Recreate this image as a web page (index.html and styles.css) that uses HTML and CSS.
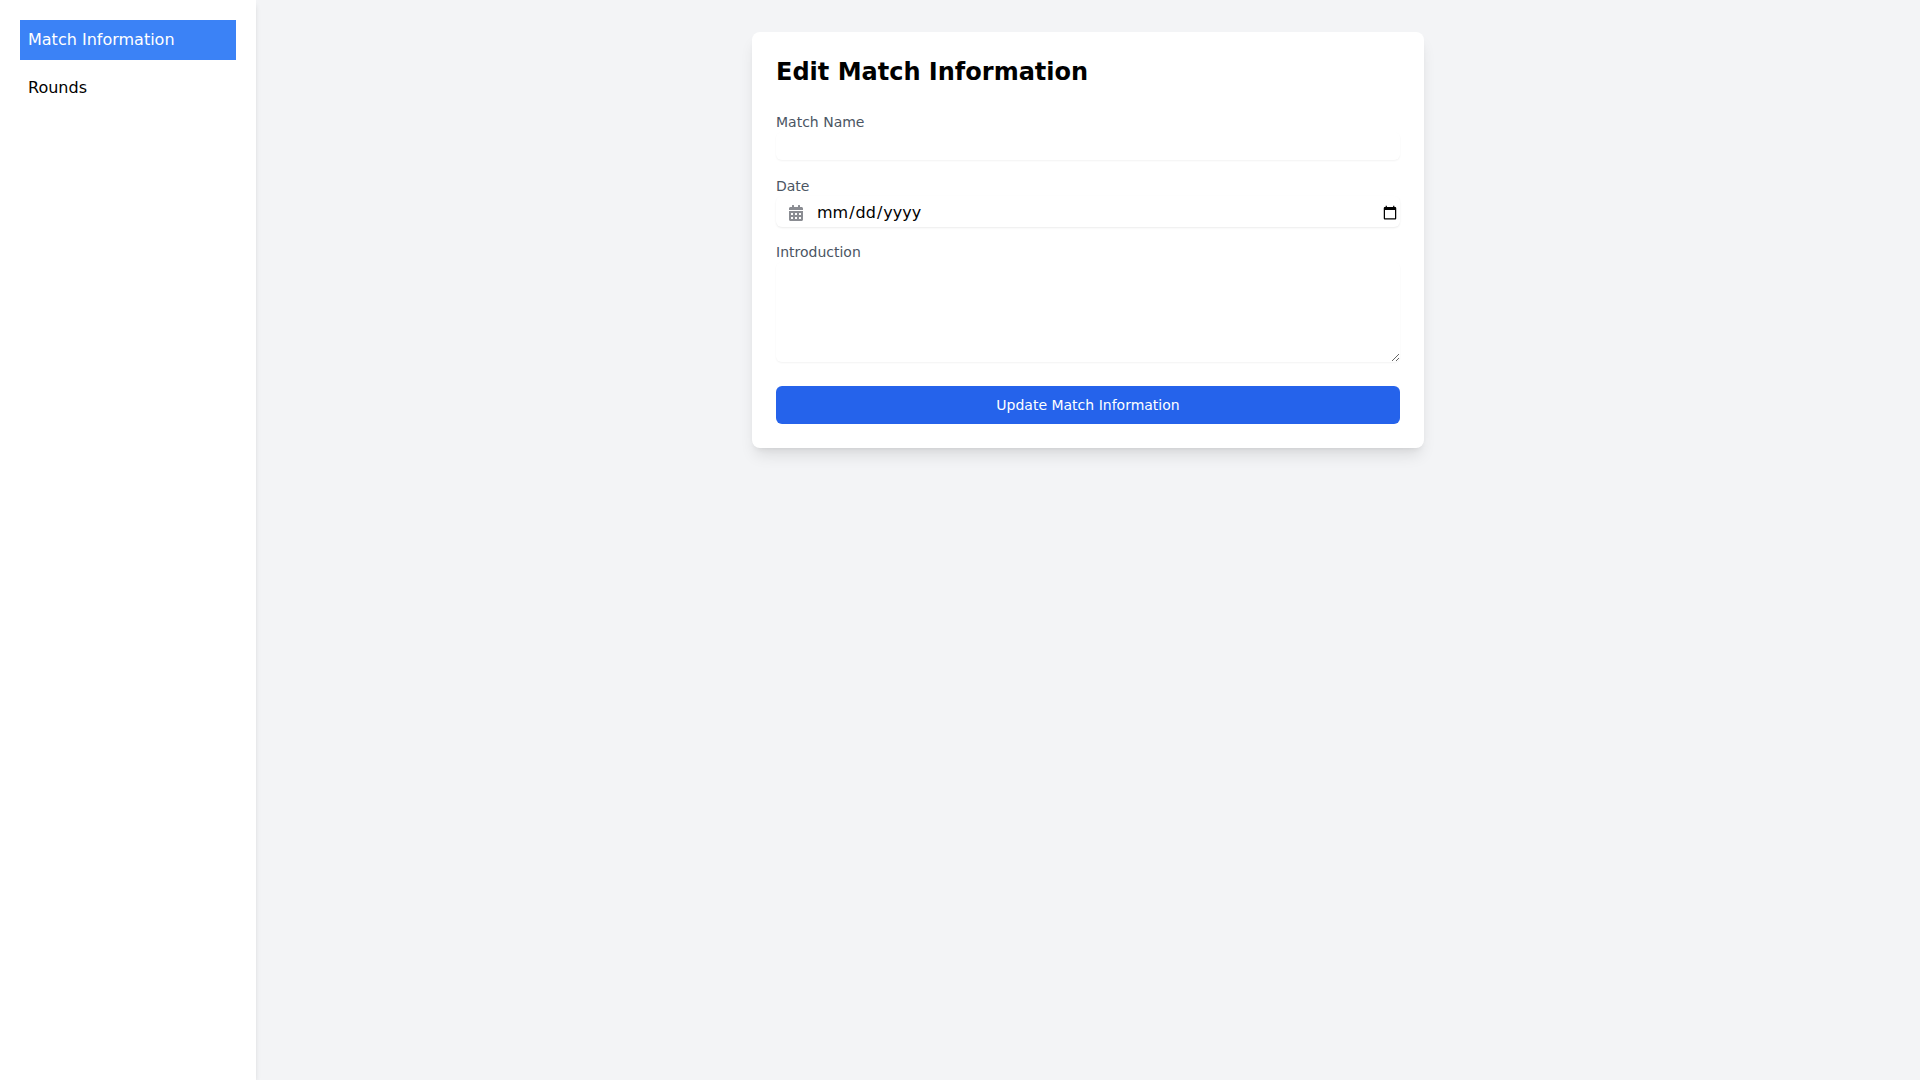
FILE: index.html
```html
<!DOCTYPE html>
<html lang="en">
<head>
<meta charset="utf-8">
<title>Edit Match Information</title>
<link rel="stylesheet" href="styles.css">
</head>
<body>
<div class="app">
  <aside class="sidebar">
    <nav class="nav">
      <a class="nav-item active">Match Information</a>
      <a class="nav-item">Rounds</a>
    </nav>
  </aside>
  <main class="main">
    <section class="card">
      <h1 class="title">Edit Match Information</h1>
      <form class="form">
        <div class="field">
          <label class="label">Match Name</label>
          <input class="control text" type="text">
        </div>
        <div class="field">
          <label class="label">Date</label>
          <div class="date-wrap">
            <svg class="date-icon" viewBox="0 0 448 512" aria-hidden="true"><path fill="currentColor" d="M0 464c0 26.500 21.500 48 48 48h352c26.500 0 48-21.500 48-48V192H0v272zm320-196c0-6.600 5.400-12 12-12h40c6.600 0 12 5.400 12 12v40c0 6.600-5.400 12-12 12h-40c-6.600 0-12-5.400-12-12v-40zm0 128c0-6.600 5.400-12 12-12h40c6.600 0 12 5.400 12 12v40c0 6.600-5.400 12-12 12h-40c-6.600 0-12-5.400-12-12v-40zM192 268c0-6.600 5.400-12 12-12h40c6.600 0 12 5.400 12 12v40c0 6.600-5.400 12-12 12h-40c-6.600 0-12-5.400-12-12v-40zm0 128c0-6.600 5.400-12 12-12h40c6.600 0 12 5.400 12 12v40c0 6.600-5.400 12-12 12h-40c-6.600 0-12-5.400-12-12v-40zM64 268c0-6.600 5.400-12 12-12h40c6.600 0 12 5.400 12 12v40c0 6.600-5.400 12-12 12H76c-6.600 0-12-5.400-12-12v-40zm0 128c0-6.600 5.400-12 12-12h40c6.600 0 12 5.400 12 12v40c0 6.600-5.400 12-12 12H76c-6.600 0-12-5.400-12-12v-40zM400 64h-48V16c0-8.800-7.200-16-16-16h-32c-8.800 0-16 7.200-16 16v48H160V16c0-8.800-7.200-16-16-16h-32c-8.800 0-16 7.200-16 16v48H48C21.500 64 0 85.500 0 112v48h448v-48c0-26.500-21.500-48-48-48z"/></svg>
            <input class="control date" type="date">
          </div>
        </div>
        <div class="field">
          <label class="label">Introduction</label>
          <textarea class="control area"></textarea>
        </div>
        <button class="submit" type="button">Update Match Information</button>
      </form>
    </section>
  </main>
</div>
</body>
</html>
```
FILE: styles.css
```css
* { box-sizing: border-box; }
html, body { margin: 0; height: 100%; }
body {
  font-family: "DejaVu Sans", sans-serif;
  font-size: 16px;
  line-height: 24px;
  color: #000;
  background: #f3f4f6;
}
.app { display: flex; height: 1080px; }
.sidebar {
  width: 256px;
  flex: none;
  background: #fff;
  padding: 20px;
  box-shadow: 0 4px 6px -1px rgba(0,0,0,.1), 0 2px 4px -2px rgba(0,0,0,.1);
}
.nav { display: flex; flex-direction: column; gap: 8px; }
.nav-item { display: block; height: 40px; padding: 8px; line-height: 24px; color: #000; }
.nav-item.active { background: #3b82f6; color: #fff; }
.main { flex: 1; display: flex; justify-content: center; align-items: flex-start; padding-top: 32px; }
.card {
  width: 672px;
  background: #fff;
  border-radius: 8px;
  padding: 24px;
  box-shadow: 0 10px 15px -3px rgba(0,0,0,.1), 0 4px 6px -4px rgba(0,0,0,.1);
}
.title { margin: 0 0 24px; font-size: 24px; line-height: 32px; font-weight: 700; }
.form { display: flex; flex-direction: column; }
.field { display: flex; flex-direction: column; margin-bottom: 16px; }
.label { display: block; font-size: 14px; line-height: 20px; color: #4b5563; }
.control {
  display: block;
  width: 100%;
  border: 0;
  outline: 0;
  background: #fff;
  border-radius: 6px;
  box-shadow: 0 1px 2px rgba(0,0,0,.05);
  font-family: inherit;
  font-size: 16px;
  color: #000;
}
.text { height: 28px; padding: 0 8px; }
.date-wrap { position: relative; }
.date { height: 30.5px; padding: 2px 0 0 40px; margin-bottom: -0.5px; box-shadow: 0 1px 2px rgba(0,0,0,.08); }
.date::-webkit-calendar-picker-indicator { margin-top: 1px; }
.date-icon { position: absolute; left: 13px; top: 9px; width: 14px; height: 16px; color: #8a8c92; z-index: 1; }
.area { height: 100px; padding: 8px; resize: vertical; margin-bottom: 8px; }
.submit {
  height: 38px;
  border: 0;
  border-radius: 6px;
  background: #2563eb;
  color: #fff;
  font-family: inherit;
  font-size: 14px;
  line-height: 20px;
  padding: 0;
}
```
